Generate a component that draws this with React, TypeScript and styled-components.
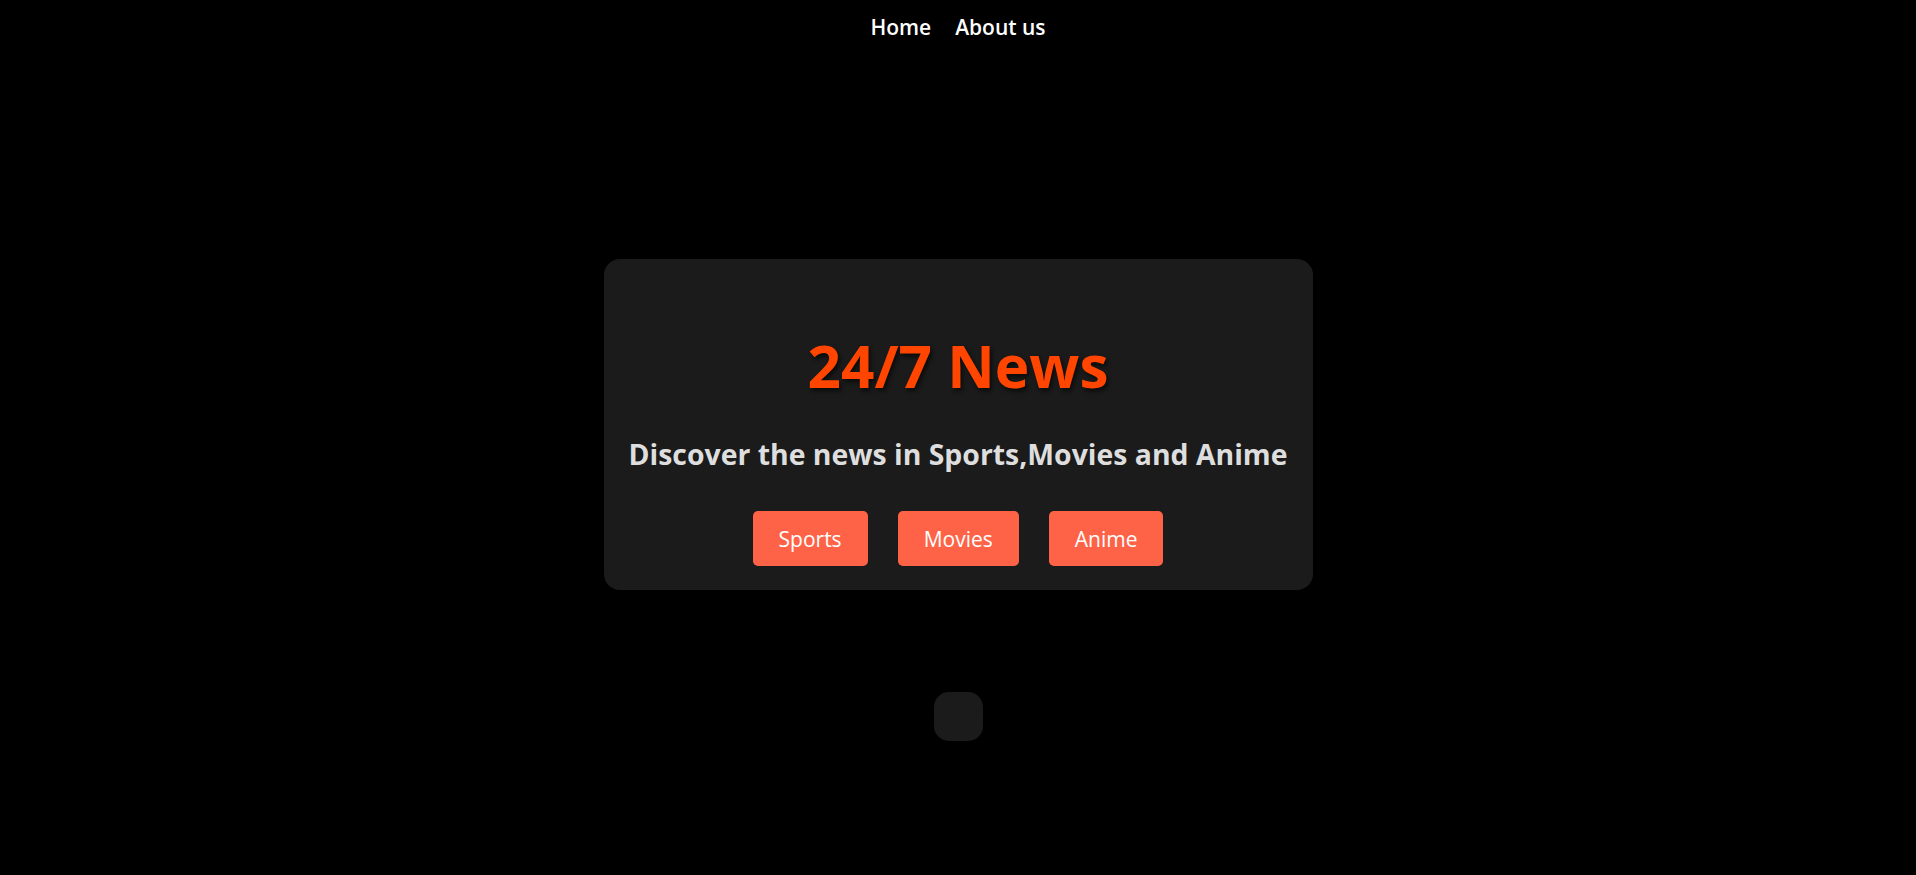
import styled, { createGlobalStyle } from "styled-components";

const GlobalStyle = createGlobalStyle`
	html, body {
		margin: 0;
		padding: 0;
		background: #000;
		color: #fff;
		font-family: "Open Sans", "Noto Sans", sans-serif;
	}
	* {
		box-sizing: border-box;
	}
`;

const Page = styled.div`
	min-height: 875px;
	display: flex;
	flex-direction: column;
	align-items: center;
`;

const Nav = styled.nav`
	display: flex;
	justify-content: center;
	gap: 24px;
	height: 54px;
	align-items: center;
	width: 100%;
`;

const NavLink = styled.a`
	color: #fff;
	font-size: 21px;
	font-weight: 600;
	text-decoration: none;
	cursor: pointer;
`;

const Hero = styled.section`
	margin-top: 205px;
	width: 709px;
	height: 331px;
	background: #1b1b1b;
	border-radius: 16px;
	display: flex;
	flex-direction: column;
	align-items: center;
	justify-content: flex-end;
	padding: 0 16px 24px;
`;

const Title = styled.h1`
	margin: 0;
	color: #ff4500;
	font-size: 58.5px;
	font-weight: 700;
	line-height: 1;
	text-shadow: 2px 3px 4px rgba(0, 0, 0, 0.6);
`;

const Subtitle = styled.h2`
	margin: 45px 0 0;
	color: #dedede;
	font-size: 28.4px;
	font-weight: 700;
	line-height: 1;
`;

const ButtonRow = styled.div`
	display: flex;
	gap: 30px;
	margin-top: 43px;
`;

const CategoryButton = styled.button`
	height: 55px;
	padding: 0 26px;
	border: none;
	border-radius: 5px;
	background: #ff6347;
	color: #fff;
	font-family: inherit;
	font-size: 21px;
	cursor: pointer;
`;

const Footer = styled.div`
	margin-top: 102px;
	width: 49px;
	height: 49px;
	border-radius: 15px;
	background: #1b1b1b;
`;

const App = () => {
	return (
		<>
			<GlobalStyle />
			<Page>
				<Nav>
					<NavLink>Home</NavLink>
					<NavLink>About us</NavLink>
				</Nav>
				<Hero>
					<Title>24/7 News</Title>
					<Subtitle>Discover the news in Sports,Movies and Anime</Subtitle>
					<ButtonRow>
						<CategoryButton>Sports</CategoryButton>
						<CategoryButton>Movies</CategoryButton>
						<CategoryButton>Anime</CategoryButton>
					</ButtonRow>
				</Hero>
				<Footer />
			</Page>
		</>
	);
};

export default App;
